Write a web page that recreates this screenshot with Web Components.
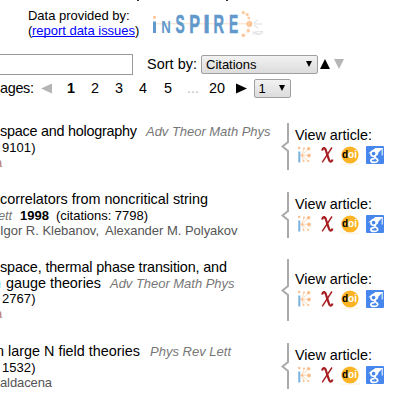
<!DOCTYPE html>
<html lang="en"><head><meta charset="utf-8"><title>Article list</title>
<style>html,body{margin:0;background:#fff}body{width:400px;height:400px;overflow:hidden;font-family:"Liberation Sans",Arial,sans-serif;color:#000}</style></head>
<body><article-page></article-page>
<script>
const define=(name,html,setup)=>customElements.define(name,class extends HTMLElement{
  connectedCallback(){
    if(this.shadowRoot)return;
    const t=document.createElement('template');t.innerHTML=html;
    this.attachShadow({mode:'open'}).append(t.content.cloneNode(true));
    if(setup)setup(this,this.shadowRoot);
  }
});
define('fit-text',`<style>:host{display:block;flex:none;height:16px}svg{display:block;overflow:visible}</style><svg height="16"><text y="12" fill="currentColor"></text></svg>`,(h,r)=>{
  const w=h.getAttribute('w'),t=r.querySelector('text');
  r.querySelector('svg').setAttribute('width',w);h.style.width=w+'px';
  t.textContent=h.getAttribute('label');t.setAttribute('textLength',w);
});
define('inspire-logo',`<style>:host{display:block;width:120px;height:40px}svg{display:block;font-family:"Liberation Sans",Arial,sans-serif}</style>
<svg width="120" height="40" viewBox="150 0 120 40">
<path d="M153 23.8H249" stroke="#fbdcc2" stroke-width="1"/>
<g fill="#6199cc" stroke="#6199cc" stroke-width=".6" font-size="26" font-weight="bold">
<path d="M153 21.5h3V33h-3z" stroke="none"/><circle cx="154.5" cy="17.3" r="1.5" fill="#fdc18d" stroke="none"/>
<text transform="translate(161.3 33) scale(.83 1)" font-size="16" stroke="none">N</text>
<text transform="translate(175.4 33) scale(.53 1)">S</text>
<text transform="translate(189.2 33) scale(.62 1)">P</text>
<text transform="translate(203.2 33) scale(.92 1)">I</text>
<text transform="translate(213.6 33) scale(.56 1)">R</text>
<text transform="translate(229.1 33) scale(.53 1)">E</text></g>
<g fill="#fdc18d"><circle cx="249.4" cy="24" r="2.9"/><circle cx="243.3" cy="12.5" r="1.6"/><circle cx="247.2" cy="14.5" r="1.5"/><circle cx="248.8" cy="18" r="1.3"/><circle cx="248.2" cy="30.7" r="1.7"/><circle cx="243.4" cy="35.2" r="1.7"/></g>
<path d="M243 12.5q6 1 6 11.5t-6 11" fill="none" stroke="#f9dfc9" stroke-width=".7"/>
<path d="M254 23l4-3.5M254 24h8.5M254 25.2l4 3" fill="none" stroke="#d4d4d4" stroke-width=".8"/>
<text x="252.5" y="35.3" font-size="5" fill="#cfcfcf" textLength="10.5">HEP</text></svg>`);
define('drop-down',`<style>:host{display:block;box-sizing:border-box;flex:none;height:19px;border:1px solid #a0a0a0;border-radius:2px;background:linear-gradient(#f2f2f2,#dcdcdc)}
div{display:flex;justify-content:space-between;align-items:center;height:17px;padding:0 5px 0 4px;font-size:13px}svg{display:block;margin-top:-2px}</style>
<div><slot></slot><svg width="6" height="6"><path d="M0 0h6L3 6z"/></svg></div>`);
define('view-links',`<style>:host{display:block;height:100%;width:119px}
section{display:flex;height:100%}.b{display:grid;grid-template-rows:1fr 11px 1fr;width:14px}.b i{border-right:2px solid #aaa;width:6px}.b svg{display:block}
.c{display:flex;flex-direction:column;justify-content:center;font-size:14.4px}.icons{display:block;margin-top:1px}</style>
<section><div class="b"><i></i><svg width="10" height="11"><path d="M7 0v1L1.5 5.5 7 10v1" fill="none" stroke="#aaa" stroke-width="2"/></svg><i></i></div>
<div class="c"><fit-text w="77" label="View article:"></fit-text>
<svg class="icons" width="92" height="20" viewBox="0 0 92 20">
<g stroke="#fcd0a8" stroke-width=".8"><path d="M7 10.3L9 3.5M7 10.3l6.5-6.5M7 10.3h7M7 10.3l6 5.5M7 10.3l1.5 5.5"/></g>
<path d="M4.3 6.5V17.5" stroke="#79b0dc" stroke-width="2"/><g fill="#fbbf8e"><circle cx="4.2" cy="3" r="1.2"/><circle cx="9" cy="3.5" r="1"/><circle cx="13.6" cy="3.8" r="1.8"/><circle cx="14" cy="10.4" r="2"/><circle cx="13.2" cy="16" r="1.1"/><circle cx="8.6" cy="16" r="1"/><circle cx="7" cy="10.4" r="1.2"/></g>
<path d="M27 5.5C28.3 1.7 30.3 2.7 31.3 6.6L33.6 13.6C34.6 17.6 36.7 17.6 37.5 14.5" fill="none" stroke="#a61c20" stroke-width="2.2"/><path d="M37 2.5L27.2 17.3" stroke="#a61c20" stroke-width="1.4"/>
<circle cx="55" cy="10" r="8.6" fill="#fcb425"/><path d="M46 19.2h18" stroke="#fdebd5" stroke-width=".8"/>
<text x="47" y="13" font-family="Liberation Sans" font-weight="bold" font-size="10">d</text><text x="53.1" y="13" font-family="Liberation Sans" font-weight="bold" font-size="10" fill="#fff">oi</text>
<rect x="71" y="1" width="18" height="18" rx="1" fill="#4787ed"/>
<path d="M73 8.5L80.5 3h7.5l-4.5 4.5-1 3-3-3.5z" fill="#fff"/><path d="M87.2 3v7.5" stroke="#fff" stroke-width="1"/>
<circle cx="78.6" cy="8.6" r="2.7" fill="#4787ed" stroke="#fff" stroke-width="1.7"/><path d="M80.8 10.8q-2.6 1.4.4 2.8c3 1.7 1.3 3.8-2 3.8-4.2 0-4.9-3.4.3-3.7" fill="none" stroke="#fff" stroke-width="1.7"/>
</svg></div></section>`);
define('article-entry',`<style>:host{display:grid;grid-template-columns:281px 119px}.text{display:flex;flex-direction:column}view-links{margin-top:var(--links-shift,0)}</style><div class="text"><slot></slot></div><view-links></view-links>`);
define('article-page',`<style>
:host{display:block;width:400px;height:400px;overflow:hidden}
header{display:flex;position:relative;height:54px;box-sizing:border-box;padding-left:28px;font-size:13px}.source{width:122px;padding-top:8px}.source fit-text{height:15px}.link{display:flex}
.mark{position:absolute;top:0;width:2px;height:1px;background:#333}
.link fit-text:nth-child(2){color:#00f;border-bottom:1px solid #00f;height:13px}
.tools{display:flex;height:21px;font-size:14.4px}.input{box-sizing:border-box;width:133px;height:21px;border:1px solid #999;border-left:0;margin-right:14px}.tools fit-text{margin:3px 4px 0 0}.tools drop-down{margin-top:1px;width:117px}.tools svg{margin:5px 0 0 2px}
.pages{display:flex;height:44px;padding-top:4px;box-sizing:border-box;font-size:14.4px}.pages>*{flex:none}.pages fit-text{margin-top:2px}.pages svg{display:block}
article-entry{font-size:13px}.l{display:flex;height:15px}.t{height:16px;font-size:14.4px}.j{font-size:13px;font-style:italic;color:#777}.a{color:#555}
</style>
<header><i class="mark" style="left:137px"></i><i class="mark" style="left:226px"></i><div class="source"><fit-text w="101.5" label="Data provided by:"></fit-text><div class="link"><fit-text w="4" label="("></fit-text><fit-text w="103" label="report data issues"></fit-text><fit-text w="4" label=")"></fit-text></div></div><inspire-logo></inspire-logo></header>
<div class="tools"><div class="input"></div><fit-text w="50" label="Sort by:"></fit-text><drop-down>Citations</drop-down><svg width="26" height="12"><path d="M0 10h10L5 0z"/><path d="M14 0h10l-5 10z" fill="#b5b5b5"/></svg></div>
<div class="pages"><fit-text w="34" label="ages:"></fit-text><svg width="33" height="20"><path d="M18 4.5v10L7 9.5z" fill="#b5b5b5"/></svg>
<fit-text w="8" label="1" style="font-weight:bold;margin-right:15.5px"></fit-text><fit-text w="8" label="2"></fit-text><fit-text w="8" label="3" style="margin-left:16.5px"></fit-text><fit-text w="8" label="4" style="margin-left:16px"></fit-text><fit-text w="8" label="5" style="margin-left:17px"></fit-text><fit-text w="12" label="..." style="margin-left:15px;color:#bbb"></fit-text><fit-text w="16" label="20" style="margin-left:9.5px"></fit-text><svg width="29" height="20"><path d="M11 4.5v10l11-5z"/></svg><drop-down style="width:37px">1</drop-down></div>
<article-entry style="padding-top:4px;height:45px;margin-bottom:24px">
<div class="l t" style="padding-top:1px"><fit-text w="137" label="space and holography"></fit-text><fit-text class="j" style="margin-left:9px" w="124.5" label="Adv Theor Math Phys"></fit-text></div><div class="l"><fit-text w="33.5" style="margin-left:1.5px" label="9101)"></fit-text></div><div class="l a"><fit-text w="7" style="margin-left:-5px;color:#b87b70" label="a"></fit-text></div></article-entry>
<article-entry style="height:45px;margin-bottom:23px"><div class="l t"><fit-text w="208" label="correlators from noncritical string"></fit-text></div><div class="l"><fit-text w="14" label="ett" class="j" style="margin-left:-2.5px;margin-right:8.5px"></fit-text><fit-text w="29" label="1998" style="font-weight:bold;margin-right:6.5px"></fit-text><fit-text w="92" label="(citations: 7798)"></fit-text></div><div class="l a"><fit-text w="99" label="Igor R. Klebanov,"></fit-text><fit-text w="132.5" style="margin-left:6px" label="Alexander M. Polyakov"></fit-text></div></article-entry>
<article-entry style="height:62px;margin-bottom:22px;--links-shift:-1px"><div class="l t"><fit-text w="227" label="space, thermal phase transition, and"></fit-text></div><div class="l t" style="height:15px"><fit-text w="8" style="margin-left:-7px;color:#55aacc" label="n"></fit-text><fit-text w="95" style="margin-left:4.5px" label="gauge theories"></fit-text><fit-text class="j" w="124.5" style="margin-left:9.5px" label="Adv Theor Math Phys"></fit-text></div><div class="l"><fit-text w="33.5" style="margin-left:1.5px" label="2767)"></fit-text></div><div class="l"><fit-text w="7" style="margin-left:-5px;color:#b87b70" label="a"></fit-text></div></article-entry>
<article-entry style="height:45px;--links-shift:-1px"><div class="l t"><fit-text w="8" label="n" style="margin-left:-4px"></fit-text><fit-text w="132" style="margin-left:4px" label="large N field theories"></fit-text><fit-text class="j" style="margin-left:10px" w="81" label="Phys Rev Lett"></fit-text></div><div class="l"><fit-text w="33.5" style="margin-left:1.5px" label="1532)"></fit-text></div><div class="l a"><fit-text w="52" label="aldacena"></fit-text></div></article-entry>`);
</script></body></html>
